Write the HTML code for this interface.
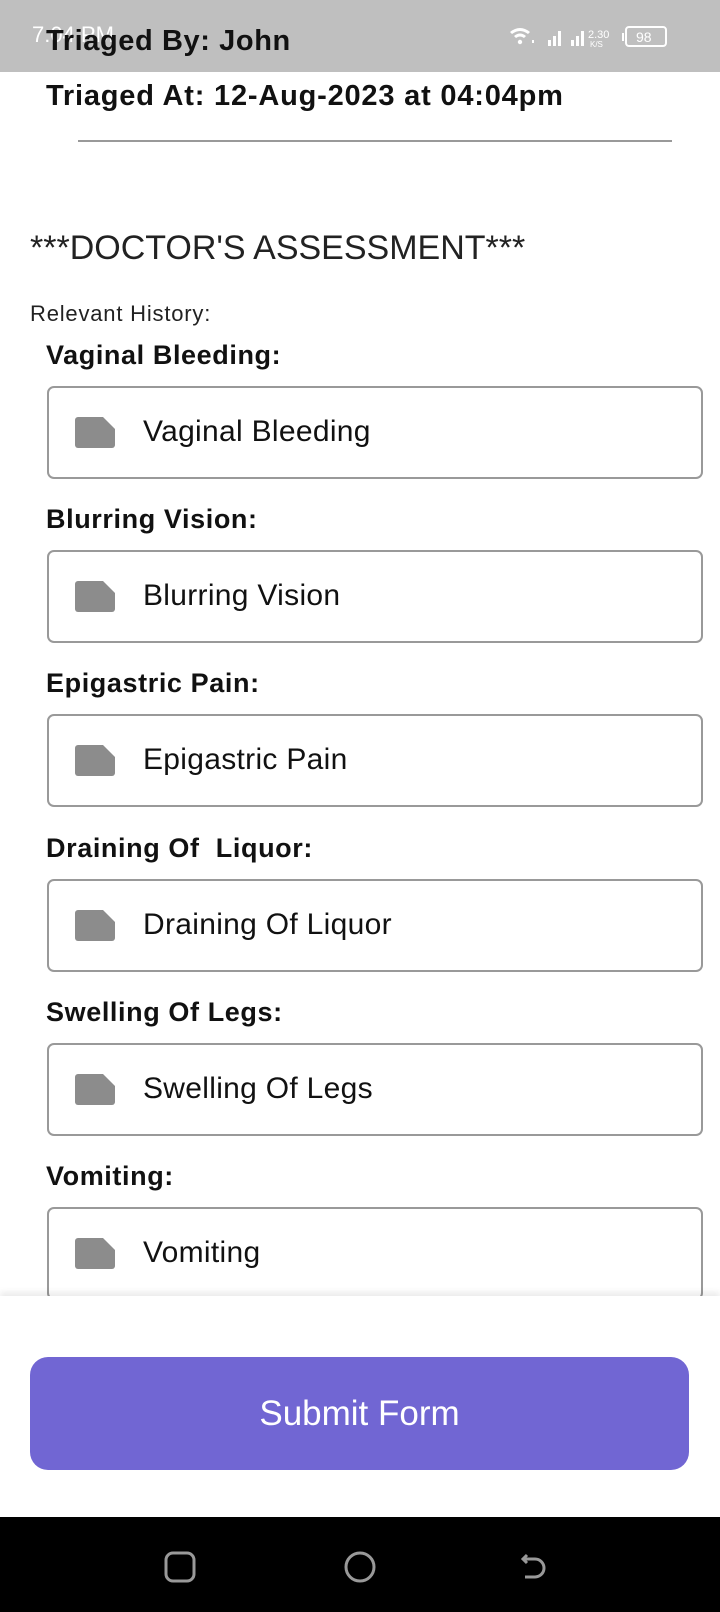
<!DOCTYPE html>
<html><head><meta charset="utf-8"><style>
*{margin:0;padding:0;box-sizing:border-box}
body{width:720px;height:1612px;position:relative;overflow:hidden;background:#fff;font-family:"Liberation Sans",sans-serif;color:#111}
.a{position:absolute;white-space:nowrap}
.lbl{font-weight:bold;font-size:27px;letter-spacing:0.6px;left:46px}
.box{position:absolute;left:47px;width:656px;height:93px;border:2px solid #999;border-radius:7px}
.box .ic{position:absolute;left:26px;top:29px}
.box span{position:absolute;left:94px;top:27px;font-size:30px;letter-spacing:0.3px;color:#111}
</style></head><body>
<div class="a" style="left:46px;top:80px;font-size:29px;font-weight:bold;letter-spacing:0.8px">Triaged At: 12-Aug-2023 at 04:04pm</div>
<div class="a" style="left:78px;top:140px;width:594px;height:2px;background:#999"></div>
<div class="a" style="left:30px;top:229px;font-size:34px;color:#222">***DOCTOR'S ASSESSMENT***</div>
<div class="a" style="left:30px;top:301px;font-size:22px;letter-spacing:0.8px;color:#222">Relevant History:</div>

<div class="a lbl" style="top:340px">Vaginal Bleeding:</div>
<div class="box" style="top:386px"><svg class="ic" width="40" height="32" viewBox="0 0 40 32"><path d="M3 0H28L40 12V28A3 3 0 0 1 37 31H3A3 3 0 0 1 0 28V3A3 3 0 0 1 3 0Z" fill="#8c8c8c"/></svg><span>Vaginal Bleeding</span></div>

<div class="a lbl" style="top:504px">Blurring Vision:</div>
<div class="box" style="top:550px"><svg class="ic" width="40" height="32" viewBox="0 0 40 32"><path d="M3 0H28L40 12V28A3 3 0 0 1 37 31H3A3 3 0 0 1 0 28V3A3 3 0 0 1 3 0Z" fill="#8c8c8c"/></svg><span>Blurring Vision</span></div>

<div class="a lbl" style="top:668px">Epigastric Pain:</div>
<div class="box" style="top:714px"><svg class="ic" width="40" height="32" viewBox="0 0 40 32"><path d="M3 0H28L40 12V28A3 3 0 0 1 37 31H3A3 3 0 0 1 0 28V3A3 3 0 0 1 3 0Z" fill="#8c8c8c"/></svg><span>Epigastric Pain</span></div>

<div class="a lbl" style="top:833px">Draining Of&nbsp; Liquor:</div>
<div class="box" style="top:879px"><svg class="ic" width="40" height="32" viewBox="0 0 40 32"><path d="M3 0H28L40 12V28A3 3 0 0 1 37 31H3A3 3 0 0 1 0 28V3A3 3 0 0 1 3 0Z" fill="#8c8c8c"/></svg><span>Draining Of Liquor</span></div>

<div class="a lbl" style="top:997px">Swelling Of Legs:</div>
<div class="box" style="top:1043px"><svg class="ic" width="40" height="32" viewBox="0 0 40 32"><path d="M3 0H28L40 12V28A3 3 0 0 1 37 31H3A3 3 0 0 1 0 28V3A3 3 0 0 1 3 0Z" fill="#8c8c8c"/></svg><span>Swelling Of Legs</span></div>

<div class="a lbl" style="top:1161px">Vomiting:</div>
<div class="box" style="top:1207px"><svg class="ic" width="40" height="32" viewBox="0 0 40 32"><path d="M3 0H28L40 12V28A3 3 0 0 1 37 31H3A3 3 0 0 1 0 28V3A3 3 0 0 1 3 0Z" fill="#8c8c8c"/></svg><span>Vomiting</span></div>

<div class="a" style="left:0;top:1296px;width:720px;height:221px;background:#fff;box-shadow:0 -4px 6px rgba(0,0,0,0.08)"></div>
<div class="a" style="left:30px;top:1357px;width:659px;height:113px;background:#7166d3;border-radius:18px;color:#fff;font-size:35px;text-align:center;line-height:113px">Submit Form</div>

<div class="a" style="left:0;top:0;width:720px;height:72px;background:#bfbfbf"></div>
<div class="a" style="left:32px;top:22px;font-size:22px;color:#fff">7:04 PM</div>
<div class="a" style="left:46px;top:25px;font-size:29px;font-weight:bold;letter-spacing:0.6px">Triaged By: John</div>
<div class="a" style="left:508px;top:24px;color:#fff;font-size:14px">
<svg width="170" height="26" viewBox="0 0 170 26"><g fill="#fff"><path d="M2 8Q12 0 22 8L20 10Q12 4 4 10Z"/><path d="M6 12Q12 7 18 12L16 14Q12 11 8 14Z"/><circle cx="12" cy="18" r="2.2"/><rect x="24" y="16" width="2" height="3"/><rect x="40" y="16" width="3" height="6"/><rect x="45" y="12" width="3" height="10"/><rect x="50" y="7" width="3" height="15"/><rect x="63" y="16" width="3" height="6"/><rect x="68" y="12" width="3" height="10"/><rect x="73" y="7" width="3" height="15"/><text x="80" y="14" font-size="11" font-family="Liberation Sans">2.30</text><text x="82" y="23" font-size="8" font-family="Liberation Sans">K/S</text></g><rect x="118" y="3" width="40" height="19" rx="3" fill="none" stroke="#fff" stroke-width="2"/><text x="128" y="18" font-size="14" fill="#fff" font-family="Liberation Sans">98</text><rect x="114" y="9" width="2" height="8" fill="#fff"/></svg></div>

<div class="a" style="left:0;top:1517px;width:720px;height:95px;background:#000"></div>
<svg class="a" style="left:0;top:1517px" width="720" height="95"><g fill="none" stroke="#999" stroke-width="3"><rect x="166" y="36" width="28" height="28" rx="7"/><circle cx="360" cy="50" r="14"/><path d="M527 38l-4 4 4 4M523 42h12a9 9 0 0 1 0 18h-10"/></g></svg>
</body></html>
